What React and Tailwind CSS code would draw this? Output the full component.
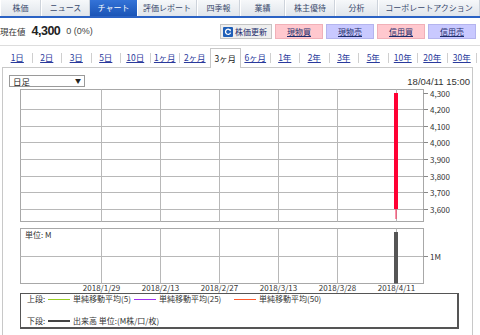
import React from "react";

const tabs = [
  { t: "株価", w: "w-[41px]" },
  { t: "ニュース", w: "w-[49px]" },
  { t: "チャート", w: "w-[47px]", a: true },
  { t: "評価レポート", w: "w-[60px]" },
  { t: "四季報", w: "w-[43px]" },
  { t: "業績", w: "w-[45px]" },
  { t: "株主優待", w: "w-[50px]" },
  { t: "分析", w: "w-[43px]" },
  { t: "コーポレートアクション", w: "w-[102px]" },
];

const periods = ["1日", "2日", "3日", "5日", "10日", "1ヶ月", "2ヶ月", "3ヶ月", "6ヶ月", "1年", "2年", "3年", "5年", "10年", "20年", "30年"];
const ACTIVE = 7;

const ys = [4.5, 20.5, 37.5, 53.5, 70.5, 87.5, 103.5, 120.5];
const prices = ["4,300", "4,200", "4,100", "4,000", "3,900", "3,800", "3,700", "3,600"];
const xs = [98.5, 157.5, 216.5, 275.5, 334.5, 393.5];
const dates = ["2018/1/29", "2018/2/13", "2018/2/27", "2018/3/13", "2018/3/28", "2018/4/11"];

function Chart() {
  return (
    <svg width="469" height="204" className="block font-['Noto_Sans_CJK_JP',sans-serif]">
      <rect x="17.5" y="0.5" width="403" height="132" fill="white" stroke="#a8a8a8" />
      {ys.slice(1).map((y) => (
        <line key={y} x1="17.5" x2="420.5" y1={y} y2={y} stroke="#b8b8b8" />
      ))}
      {xs.map((x) => (
        <line key={x} x1={x} x2={x} y1="0.5" y2="132.5" stroke="#b8b8b8" />
      ))}
      {ys.map((y, i) => (
        <g key={"p" + i}>
          <line x1="420.5" x2="425" y1={y} y2={y} stroke="#888" />
          <text x="427" y={y + 3} fontSize="8" fill="#333">{prices[i]}</text>
        </g>
      ))}
      <line x1="393" x2="393" y1="118" y2="130" stroke="#ff2050" strokeWidth="1" />
      <rect x="391" y="4" width="4" height="116" fill="#ff0033" />

      <rect x="17.5" y="139.5" width="403" height="55" fill="white" stroke="#a8a8a8" />
      <line x1="17.5" x2="420.5" y1="167.5" y2="167.5" stroke="#b8b8b8" />
      {xs.map((x) => (
        <line key={"v" + x} x1={x} x2={x} y1="139.5" y2="194.5" stroke="#b8b8b8" />
      ))}
      <rect x="391" y="143" width="4" height="51.5" fill="#555" />
      <line x1="420.5" x2="425" y1="167.5" y2="167.5" stroke="#888" />
      <text x="427" y="170.5" fontSize="8" fill="#333">1M</text>
      <text x="22" y="149" fontSize="8" fill="#333">単位: M</text>

      {dates.map((d, i) => (
        <text key={d} x={xs[i]} y="202" fontSize="8" fill="#333" textAnchor="middle">{d}</text>
      ))}
    </svg>
  );
}

function RefreshIcon() {
  return (
    <svg width="10" height="10" viewBox="0 0 10 10" className="block">
      <rect x="0" y="0" width="10" height="10" rx="1" fill="#1f5fb8" />
      <path d="M7.3 3.4 A2.6 2.6 0 1 0 7.6 5.6" fill="none" stroke="white" strokeWidth="1.3" />
      <path d="M5.8 2.2 L8 2.6 L7.6 4.6 Z" fill="white" />
    </svg>
  );
}

function Swatch({ color, w = 1 }) {
  return (
    <svg width="22" height="10" className="block shrink-0">
      <line x1="0" x2="22" y1={w === 1 ? 5.5 : 5} y2={w === 1 ? 5.5 : 5} stroke={color} strokeWidth={w} />
    </svg>
  );
}

export default function App() {
  return (
    <div className="w-[480px] h-[335px] overflow-hidden bg-white font-['Noto_Sans_CJK_JP',sans-serif] text-[#333]">
      <div className="flex h-[18px] border-b-2 border-[#2a62c4]">
        {tabs.map((tab) => (
          <div
            key={tab.t}
            className={
              tab.a
                ? `${tab.w} flex items-center justify-center bg-linear-to-b from-[#3473d8] to-[#1a54b6] text-white text-[8px] leading-none`
                : `${tab.w} flex items-center justify-center bg-linear-to-b from-[#f6f8fa] to-[#e0e5eb] text-[#3a4a6c] text-[8px] leading-none border-r border-[#cdd3db] border-l border-l-white`
            }
          >
            {tab.t}
          </div>
        ))}
      </div>

      <div className="flex items-center h-[28px] border-b border-[#dddddd]">
        <span className="text-[8.5px] leading-none text-[#333]">現在値</span>
        <span className="ml-[6px] font-['Liberation_Sans',sans-serif] font-bold text-[12.5px] tracking-[-0.5px] leading-none text-[#222]">4,300</span>
        <span className="ml-[6px] font-['Liberation_Sans',sans-serif] text-[9px] leading-none text-[#444]">0 (0%)</span>
        <div className="ml-auto mr-[4px] flex gap-[3px]">
          <div className="w-[52px] h-[15px] flex items-center gap-[2px] pl-[2px] bg-[#eeeeee] border border-[#c4c4c4] text-[8px] leading-none text-[#1c2c6c]">
            <RefreshIcon />
            <span>株価更新</span>
          </div>
          <div className="w-[48px] h-[15px] flex items-center justify-center bg-[#ffc8ce] border border-[#f0b0b8] text-[8px] leading-none text-[#1c2c6c] underline">現物買</div>
          <div className="w-[48px] h-[15px] flex items-center justify-center bg-[#c9c9ff] border border-[#b4b4ee] text-[8px] leading-none text-[#1c2c6c] underline">現物売</div>
          <div className="w-[48px] h-[15px] flex items-center justify-center bg-[#ffc8ce] border border-[#f0b0b8] text-[8px] leading-none text-[#1c2c6c] underline">信用買</div>
          <div className="w-[48px] h-[15px] flex items-center justify-center bg-[#c9c9ff] border border-[#b4b4ee] text-[8px] leading-none text-[#1c2c6c] underline">信用売</div>
        </div>
      </div>

      <div className="flex items-end h-[21px] pl-[3px] pr-[3px]">
        {periods.map((p, i) =>
          i === ACTIVE ? (
            <div
              key={p}
              className="relative z-10 -mb-px flex-1 h-[20px] flex items-center justify-center bg-white border border-b-0 border-[#c8c8c8] text-[8.5px] leading-none text-[#222]"
            >
              {p}
            </div>
          ) : (
            <div key={p} className="flex-1 h-[19px] flex items-center">
              <span className="flex-1 text-center text-[8.5px] leading-none text-[#2a3a9c] underline">{p}</span>
              {i !== ACTIVE - 1 && <span className="w-px h-[10px] bg-[#cfcfcf]" />}
            </div>
          )
        )}
      </div>

      <div className="ml-[2px] w-[471px] h-[300px] border border-[#c8c8c8]">
        <div className="flex justify-between h-[21px]">
          <div className="ml-[6px] mt-[7px] w-[76px] h-[12px] flex items-center justify-between px-[3px] border border-[#9a9a9a] bg-white">
            <span className="text-[8.5px] leading-none text-[#222]">日足</span>
            <span className="text-[6px] leading-none text-[#222]">▼</span>
          </div>
          <span className="mt-[9px] mr-[2px] font-['Liberation_Sans',sans-serif] text-[9.5px] leading-none text-[#333]">18/04/11 15:00</span>
        </div>
        <Chart />
        <div className="ml-[17px] w-[439px] h-[36px] flex flex-col justify-between border border-[#555] border-b-2 border-r-2 text-[8px] leading-[10px] text-[#333]">
          <div className="flex items-start h-[10px] pl-[6px]">
            <span className="w-[21px]">上段:</span>
            <Swatch color="#99cc22" />
            <span className="ml-[3px] w-[61px]">単純移動平均(5)</span>
            <Swatch color="#a030f0" />
            <span className="ml-[3px] w-[75px]">単純移動平均(25)</span>
            <Swatch color="#ff5a2c" />
            <span className="ml-[3px]">単純移動平均(50)</span>
          </div>
          <div className="flex items-start h-[10px] pl-[6px] mb-[1px]">
            <span className="w-[21px]">下段:</span>
            <Swatch color="#444444" w={2} />
            <span className="ml-[3px]">出来高 単位:(M株/口/枚)</span>
          </div>
        </div>
      </div>
    </div>
  );
}
